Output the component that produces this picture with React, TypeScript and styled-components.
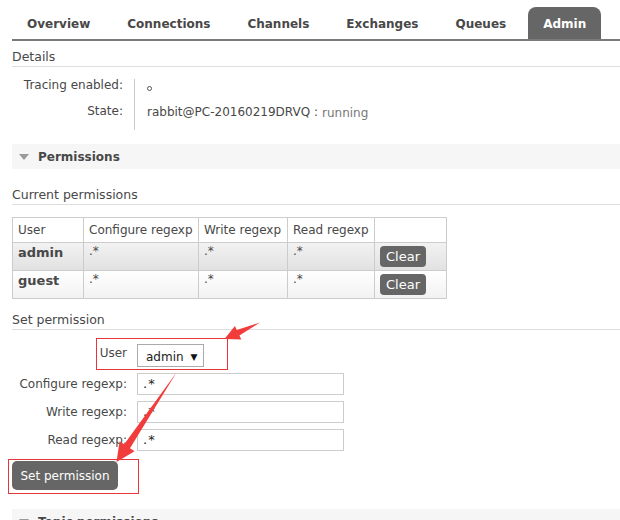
import React from "react";
import styled, { createGlobalStyle } from "styled-components";

const Global = createGlobalStyle`
  html, body { margin: 0; padding: 0; background: #fff; }
  body {
    font-family: "DejaVu Sans", Verdana, sans-serif;
    font-size: 12px;
    color: #484848;
  }
`;

const Page = styled.div`
  position: relative;
  width: 620px;
  height: 520px;
  overflow: hidden;
  padding-left: 12px;
  box-sizing: border-box;
`;

const Tabs = styled.nav`
  display: flex;
  gap: 7px;
  margin-top: 7px;
  height: 32px;
  border-bottom: 2px solid #7a7a7a;
  margin-right: -20px;
`;

const Tab = styled.div<{ $active?: boolean }>`
  display: flex;
  align-items: center;
  padding: 1px 15px 0;
  font-size: 12px;
  font-weight: bold;
  color: ${(p) => (p.$active ? "#fff" : "#484848")};
  background: ${(p) => (p.$active ? "#666" : "transparent")};
  border-radius: 8px 8px 0 0;
`;

const SubHeading = styled.h3<{ $top: number }>`
  margin: ${(p) => p.$top}px -20px 0 0;
  padding: 0 0 2px;
  font-size: 12.5px;
  font-weight: normal;
  line-height: 15px;
  color: #484848;
  border-bottom: 1px solid #ddd;
`;

const Facts = styled.div`
  display: grid;
  grid-template-columns: 122px auto;
  grid-auto-rows: 25.5px;
  margin-top: 12px;
`;

const FactLabel = styled.div`
  text-align: right;
  padding-right: 11px;
  line-height: 14px;
  margin-top: -1px;
`;

const FactValue = styled.div`
  border-left: 1px solid #ccc;
  padding-left: 12px;
  line-height: 14px;
  display: flex;
  align-items: flex-start;
  white-space: nowrap;
`;

const Circle = styled.span`
  display: inline-block;
  width: 3px;
  height: 3px;
  border: 1px solid #555;
  border-radius: 50%;
  margin-top: 7px;
`;

const Muted = styled.span`
  color: #777;
  margin-left: 4px;
  margin-top: 1px;
`;

const SectionHeader = styled.div<{ $top: number }>`
  display: flex;
  align-items: center;
  gap: 9px;
  height: 25px;
  margin: ${(p) => p.$top}px -20px 0 0;
  padding-left: 7px;
  background: #f6f6f6;
  font-size: 12px;
  font-weight: bold;
  color: #484848;
`;

const Caret = styled.span`
  width: 0;
  height: 0;
  border-left: 5px solid transparent;
  border-right: 5px solid transparent;
  border-top: 6px solid #9a9a9a;
`;

const Table = styled.table`
  margin-top: 12px;
  border-collapse: collapse;
  table-layout: fixed;
  width: 435px;
`;

const Col = styled.col<{ $w: number }>`
  width: ${(p) => p.$w}px;
`;

const Th = styled.th`
  border: 1px solid #ccc;
  height: 23px;
  padding: 0 5px 1px;
  text-align: left;
  font-weight: normal;
  white-space: nowrap;
`;

const Tr = styled.tr<{ $alt?: boolean }>`
  background: ${(p) =>
    p.$alt
      ? "linear-gradient(#f2f2f2, #e1e1e1)"
      : "linear-gradient(#ffffff, #f1f1f1)"};
`;

const Td = styled.td<{ $strong?: boolean }>`
  border: 1px solid #ccc;
  height: 28px;
  padding: ${(p) => (p.$strong ? "1px" : "2px")} 5px 0;
  vertical-align: top;
  font-weight: ${(p) => (p.$strong ? "bold" : "normal")};
  font-size: ${(p) => (p.$strong ? "13px" : "12px")};
  line-height: ${(p) => (p.$strong ? "17px" : "12px")};
  box-sizing: border-box;
`;

const SmallButton = styled.button`
  height: 21px;
  padding: 0 6px;
  margin-top: 1px;
  border: none;
  border-radius: 4px;
  background: #666;
  color: #fff;
  font-family: inherit;
  font-size: 13px;
`;

const Form = styled.div`
  display: grid;
  grid-template-columns: 115px 207px;
  column-gap: 10px;
  row-gap: 6px;
  margin-top: 14px;
`;

const FormLabel = styled.label<{ $shift?: number }>`
  text-align: right;
  font-size: 12px;
  line-height: 22px;
  margin-top: ${(p) => p.$shift ?? 0}px;
  white-space: nowrap;
`;

const SelectBox = styled.div`
  justify-self: start;
  display: flex;
  align-items: center;
  gap: 7px;
  height: 23px;
  padding: 2px 5px 0 8px;
  box-sizing: border-box;
  border: 1px solid #aaa;
  font-size: 12px;
  color: #222;
`;

const Arrow = styled.span`
  font-size: 9px;
  color: #111;
`;

const TextInput = styled.div`
  height: 22px;
  box-sizing: border-box;
  border: 1px solid #ccc;
  padding: 0 5px;
  font-size: 13px;
  line-height: 20px;
  color: #222;
  letter-spacing: 1px;
`;

const BigButton = styled.button`
  margin-top: 10px;
  width: 106px;
  height: 29px;
  border: none;
  border-radius: 5px;
  background: #666;
  color: #fff;
  font-family: inherit;
  font-size: 12px;
  padding: 0;
  display: block;
`;

const Overlay = styled.svg`
  position: absolute;
  left: 0;
  top: 0;
  pointer-events: none;
`;

function arrowPoints(tx: number, ty: number, hx: number, hy: number, hl: number, hw: number, iw: number) {
  const dx = hx - tx;
  const dy = hy - ty;
  const len = Math.hypot(dx, dy);
  const ux = dx / len;
  const uy = dy / len;
  const nx = -uy;
  const ny = ux;
  const bx = hx - hl * ux;
  const by = hy - hl * uy;
  const pts = [
    [tx, ty],
    [bx + iw * nx, by + iw * ny],
    [bx + hw * nx, by + hw * ny],
    [hx, hy],
    [bx - hw * nx, by - hw * ny],
    [bx - iw * nx, by - iw * ny],
  ];
  return pts.map((p) => p.map((v) => v.toFixed(1)).join(",")).join(" ");
}

const rows = [
  { user: "admin", alt: true },
  { user: "guest", alt: false },
];

export default function App() {
  return (
    <>
      <Global />
      <Page>
        <Tabs>
          <Tab>Overview</Tab>
          <Tab>Connections</Tab>
          <Tab>Channels</Tab>
          <Tab>Exchanges</Tab>
          <Tab>Queues</Tab>
          <Tab $active>Admin</Tab>
        </Tabs>

        <SubHeading $top={8}>Details</SubHeading>
        <Facts>
          <FactLabel>Tracing enabled:</FactLabel>
          <FactValue>
            <Circle />
          </FactValue>
          <FactLabel>State:</FactLabel>
          <FactValue>
            rabbit@PC-20160219DRVQ :<Muted>running</Muted>
          </FactValue>
        </Facts>

        <SectionHeader $top={14}>
          <Caret />
          Permissions
        </SectionHeader>

        <SubHeading $top={18}>Current permissions</SubHeading>
        <Table>
          <colgroup>
            <Col $w={71} />
            <Col $w={115} />
            <Col $w={89} />
            <Col $w={87} />
            <Col $w={72} />
          </colgroup>
          <thead>
            <tr>
              <Th>User</Th>
              <Th>Configure regexp</Th>
              <Th>Write regexp</Th>
              <Th>Read regexp</Th>
              <Th></Th>
            </tr>
          </thead>
          <tbody>
            {rows.map((r) => (
              <Tr key={r.user} $alt={r.alt}>
                <Td $strong>{r.user}</Td>
                <Td>.*</Td>
                <Td>.*</Td>
                <Td>.*</Td>
                <Td>
                  <SmallButton>Clear</SmallButton>
                </Td>
              </Tr>
            ))}
          </tbody>
        </Table>

        <SubHeading $top={13}>Set permission</SubHeading>
        <Form>
          <FormLabel $shift={-2}>User</FormLabel>
          <SelectBox>
            admin <Arrow>▼</Arrow>
          </SelectBox>
          <FormLabel>Configure regexp:</FormLabel>
          <TextInput>.*</TextInput>
          <FormLabel>Write regexp:</FormLabel>
          <TextInput>.*</TextInput>
          <FormLabel>Read regexp:</FormLabel>
          <TextInput>.*</TextInput>
        </Form>
        <BigButton>Set permission</BigButton>

        <SectionHeader $top={19}>
          <Caret />
          Topic permissions
        </SectionHeader>

        <Overlay width={620} height={520} viewBox="0 0 620 520">
          <rect x={96.5} y={338.5} width={131} height={31} fill="none" stroke="#e8353a" strokeWidth={1} />
          <rect x={8.5} y={459.5} width={130} height={34} fill="none" stroke="#e8353a" strokeWidth={1} />
          <polygon points={arrowPoints(260, 322.5, 224.5, 339, 15, 7.5, 3)} fill="#f23c3c" />
          <polygon points={arrowPoints(176.5, 372.5, 116.5, 462, 19, 9, 3.5)} fill="#f23c3c" />
        </Overlay>
      </Page>
    </>
  );
}
